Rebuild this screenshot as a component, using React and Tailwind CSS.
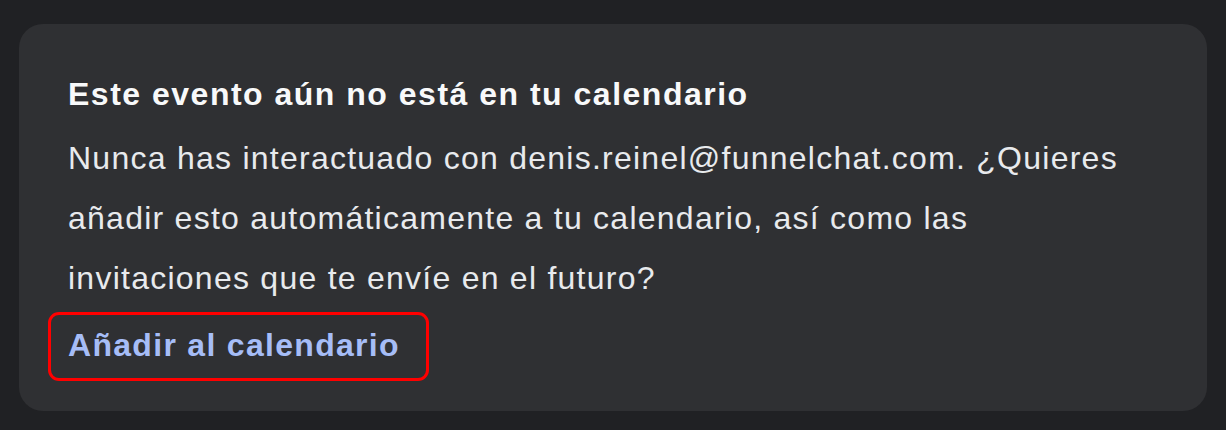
import React from 'react';

const App = () => {
  return (
    <div className="w-[1226px] h-[430px] bg-[#202124] pt-6 pl-[19px] pr-[19px] font-['Liberation_Sans',Arial,sans-serif]">
      <div className="h-[387px] rounded-[24px] bg-[#2f3033] pl-[49px] pr-[49px] pt-[50px]">
        {/* Título */}
        <h2 className="text-[32px] leading-[40px] font-bold text-[#f8f9fa] tracking-[1.5px]">
          Este evento aún no está en tu calendario
        </h2>

        {/* Descripción */}
        <p className="mt-[14px] text-[32px] leading-[60px] text-[#e8eaed] tracking-[1.25px]">
          Nunca has interactuado con denis.reinel@funnelchat.com. ¿Quieres
          <br />
          añadir esto automáticamente a tu calendario, así como las
          <br />
          invitaciones que te envíe en el futuro?
        </p>

        {/* Acción */}
        <div className="-ml-[20px] mt-[4px] flex items-center w-[381px] h-[69px] pl-[17px] pb-[3px] rounded-[11px] border-[3px] border-[#ff0000]">
          <span className="text-[32px] leading-[36px] font-bold text-[#a6bdf7] tracking-[1.3px]">
            Añadir al calendario
          </span>
        </div>
      </div>
    </div>
  );
};

export default App;
